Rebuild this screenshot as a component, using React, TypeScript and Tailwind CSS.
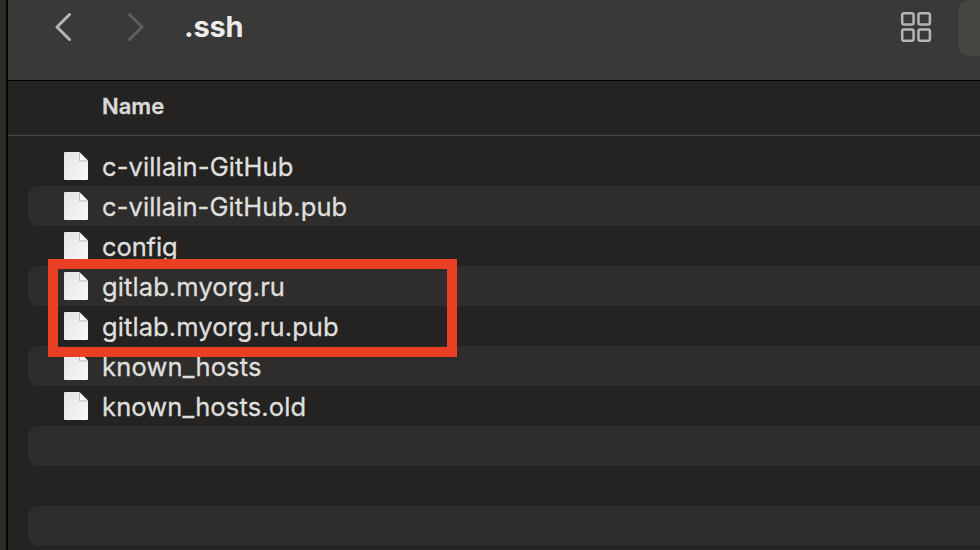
type FileEntry = { name: string; spacing: string };

const files: FileEntry[] = [
  { name: "c-villain-GitHub", spacing: "tracking-[0.12px]" },
  { name: "c-villain-GitHub.pub", spacing: "tracking-[0.1px]" },
  { name: "config", spacing: "tracking-[-0.1px]" },
  { name: "gitlab.myorg.ru", spacing: "tracking-[0.1px]" },
  { name: "gitlab.myorg.ru.pub", spacing: "tracking-[0.08px]" },
  { name: "known_hosts", spacing: "tracking-[0.18px]" },
  { name: "known_hosts.old", spacing: "tracking-[0.14px]" },
];

function Chevron({ flip, className }: { flip?: boolean; className: string }) {
  return (
    <svg width="20" height="32" viewBox="0 0 20 32" fill="none" className={className}>
      <path
        d={flip ? "M3.500 3.500 16 16 3.500 28.500" : "M18.500 3.500 6 16 18.500 28.500"}
        stroke="currentColor"
        strokeWidth="3"
        strokeLinecap="round"
        strokeLinejoin="round"
      />
    </svg>
  );
}

function GridIcon() {
  return (
    <svg width="32" height="32" viewBox="0 0 32 32" fill="none" stroke="#b5b5b4" strokeWidth="2.5">
      <rect x="2.2" y="2.2" width="11.4" height="11.4" rx="1.8" />
      <rect x="18.5" y="2.2" width="11.4" height="11.4" rx="1.8" />
      <rect x="2.2" y="18.4" width="11.4" height="11.4" rx="1.8" />
      <rect x="18.5" y="18.4" width="11.4" height="11.4" rx="1.8" />
    </svg>
  );
}

function FileIcon() {
  return (
    <svg width="24" height="28" viewBox="0 0 24 28" className="shrink-0">
      <defs>
        <linearGradient id="page" x1="0" y1="0" x2="1" y2="1">
          <stop offset="0" stopColor="#e4e4e4" />
          <stop offset="1" stopColor="#f8f8f8" />
        </linearGradient>
      </defs>
      <path d="M1 0H15.5L24 8.500V27a1 1 0 0 1-1 1H1a1 1 0 0 1-1-1V1a1 1 0 0 1 1-1Z" fill="url(#page)" />
      <path d="M15.500 8.800V0.500L23.800 8.800Z" fill="#fafafa" />
      <path d="M15.500 0.500V8.900H23.800" fill="none" stroke="#b0b0b0" strokeWidth="0.800" />
    </svg>
  );
}

function Row({ file, striped }: { file?: FileEntry; striped: boolean }) {
  return (
    <div
      className={
        striped
          ? "flex h-10 shrink-0 items-center rounded-l-[10px] bg-[#2e2d2b] pl-9"
          : "flex h-10 shrink-0 items-center pl-9"
      }
    >
      {file && (
        <>
          <FileIcon />
          <span
            className={`ml-3.5 whitespace-nowrap pt-0.5 text-[25.5px] leading-9 text-[#dfdfde] [-webkit-text-stroke:0.3px_#dfdfde] ${file.spacing}`}
          >
            {file.name}
          </span>
        </>
      )}
    </div>
  );
}

export default function App() {
  const rows = Array.from({ length: 10 }, (_, i) => files[i]);
  return (
    <div className="flex h-[550px] w-[980px] overflow-hidden bg-[#2c2b25] pl-1.5 font-['Inter',sans-serif]">
      <main className="flex min-w-0 flex-1 flex-col border-l-2 border-black bg-[#242321]">
        <header className="flex h-[81px] shrink-0 items-start border-b border-black bg-[#393938]">
          <Chevron className="ml-[43px] mt-[11px] text-[#b5b5b4]" />
          <Chevron flip className="ml-[55px] mt-[11px] text-[#5e5e5d]" />
          <h1 className="ml-[38px] mt-[9px] text-[29px] font-bold leading-9 tracking-[-0.2px] text-[#ececeb]">.ssh</h1>
          <div className="ml-auto mt-[11px]">
            <GridIcon />
          </div>
          <div className="ml-[26px] h-14 w-[22px] rounded-l-xl bg-[#454542]" />
        </header>
        <div className="flex h-[55px] shrink-0 items-center border-b border-[#454543] pb-1 pl-[94px] text-[22px] font-semibold text-[#d9d9d8] [-webkit-text-stroke:0.3px_#d9d9d8]">
          Name
        </div>
        <section className="relative ml-5 flex flex-col pt-2.5">
          {rows.map((file, i) => (
            <Row key={i} file={file} striped={i % 2 === 1} />
          ))}
          <div className="absolute left-5 top-[123px] h-[98px] w-[409px] border-[10px] border-[#e93f25]" />
        </section>
      </main>
    </div>
  );
}
